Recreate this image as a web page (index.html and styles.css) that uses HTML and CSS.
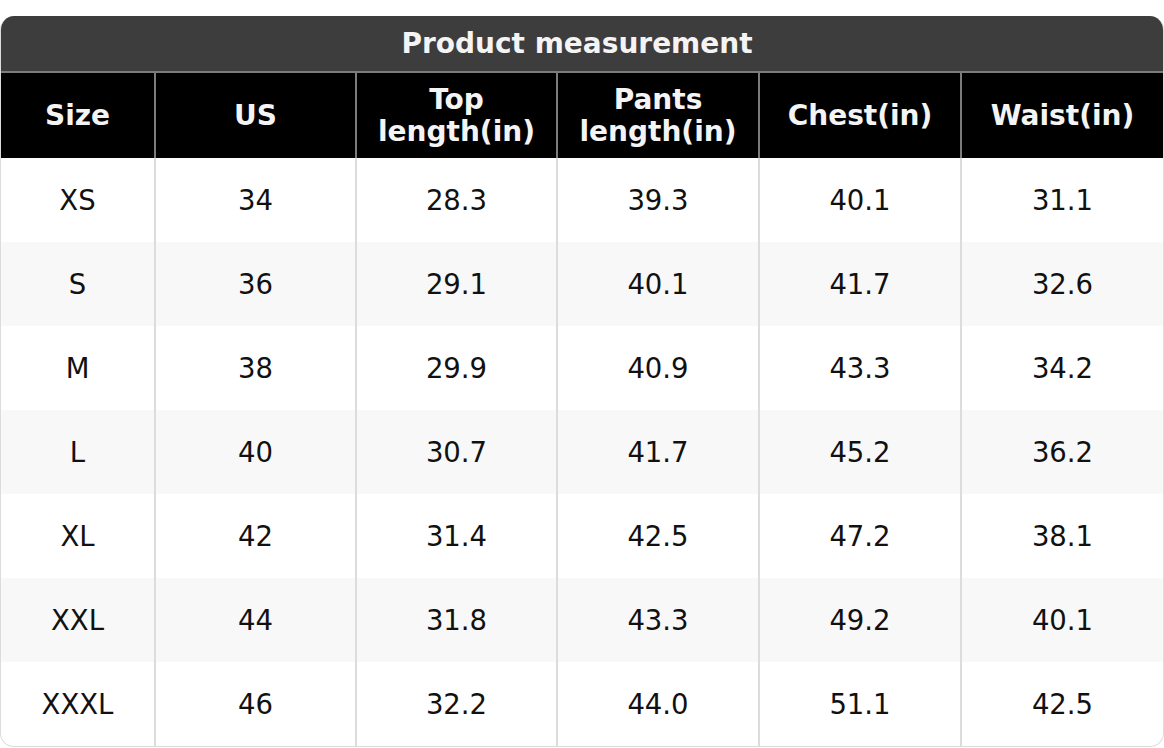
FILE: index.html
```html
<!DOCTYPE html>
<html>
<head>
<meta charset="utf-8">
<link rel="stylesheet" href="styles.css">
</head>
<body>
<div class="card">
  <div class="title">Product measurement</div>
  <table class="sizes">
    <colgroup>
      <col class="c-size"><col class="c-us"><col class="c-top"><col class="c-pants"><col class="c-chest"><col class="c-waist">
    </colgroup>
    <thead>
      <tr><th>Size</th><th>US</th><th>Top<br>length(in)</th><th>Pants<br>length(in)</th><th>Chest(in)</th><th>Waist(in)</th></tr>
    </thead>
    <tbody>
      <tr><td>XS</td><td>34</td><td>28.3</td><td>39.3</td><td>40.1</td><td>31.1</td></tr>
      <tr><td>S</td><td>36</td><td>29.1</td><td>40.1</td><td>41.7</td><td>32.6</td></tr>
      <tr><td>M</td><td>38</td><td>29.9</td><td>40.9</td><td>43.3</td><td>34.2</td></tr>
      <tr><td>L</td><td>40</td><td>30.7</td><td>41.7</td><td>45.2</td><td>36.2</td></tr>
      <tr><td>XL</td><td>42</td><td>31.4</td><td>42.5</td><td>47.2</td><td>38.1</td></tr>
      <tr><td>XXL</td><td>44</td><td>31.8</td><td>43.3</td><td>49.2</td><td>40.1</td></tr>
      <tr><td>XXXL</td><td>46</td><td>32.2</td><td>44.0</td><td>51.1</td><td>42.5</td></tr>
    </tbody>
  </table>
</div>
</body>
</html>
```
FILE: styles.css
```css
html, body {
  margin: 0;
  padding: 0;
  background: #fff;
}
body {
  padding-top: 16px;
  font-family: "DejaVu Sans", Verdana, sans-serif;
}
.card {
  width: 1164px;
  box-sizing: border-box;
  border: 1px solid #dcdcdc;
  border-top: none;
  border-radius: 14px;
  overflow: hidden;
}
.title {
  background: #3d3d3d;
  color: #f4f4f4;
  font-weight: bold;
  font-size: 28px;
  height: 55px;
  line-height: 55px;
  padding-right: 10px;
  text-align: center;
  border-bottom: 2px solid #7c7c7c;
}
.sizes {
  width: 100%;
  table-layout: fixed;
  border-collapse: collapse;
}
.c-size { width: 154px; }
.c-us { width: 201px; }
.c-top { width: 201px; }
.c-pants { width: 202px; }
.c-chest { width: 202px; }
.c-waist { width: auto; }
.sizes th {
  background: #000;
  color: #f4f4f4;
  font-weight: bold;
  font-size: 28px;
  line-height: 32px;
  height: 85px;
  padding: 0;
  text-align: center;
  border-left: 2px solid #7c7c7c;
}
.sizes td {
  font-size: 27.5px;
  height: 84px;
  padding: 0;
  text-align: center;
  color: #111;
  border-left: 2px solid #dcdcdc;
}
.sizes th:first-child, .sizes td:first-child {
  border-left: none;
}
.sizes tbody tr:nth-child(even) td {
  background: #f8f8f8;
}
```
